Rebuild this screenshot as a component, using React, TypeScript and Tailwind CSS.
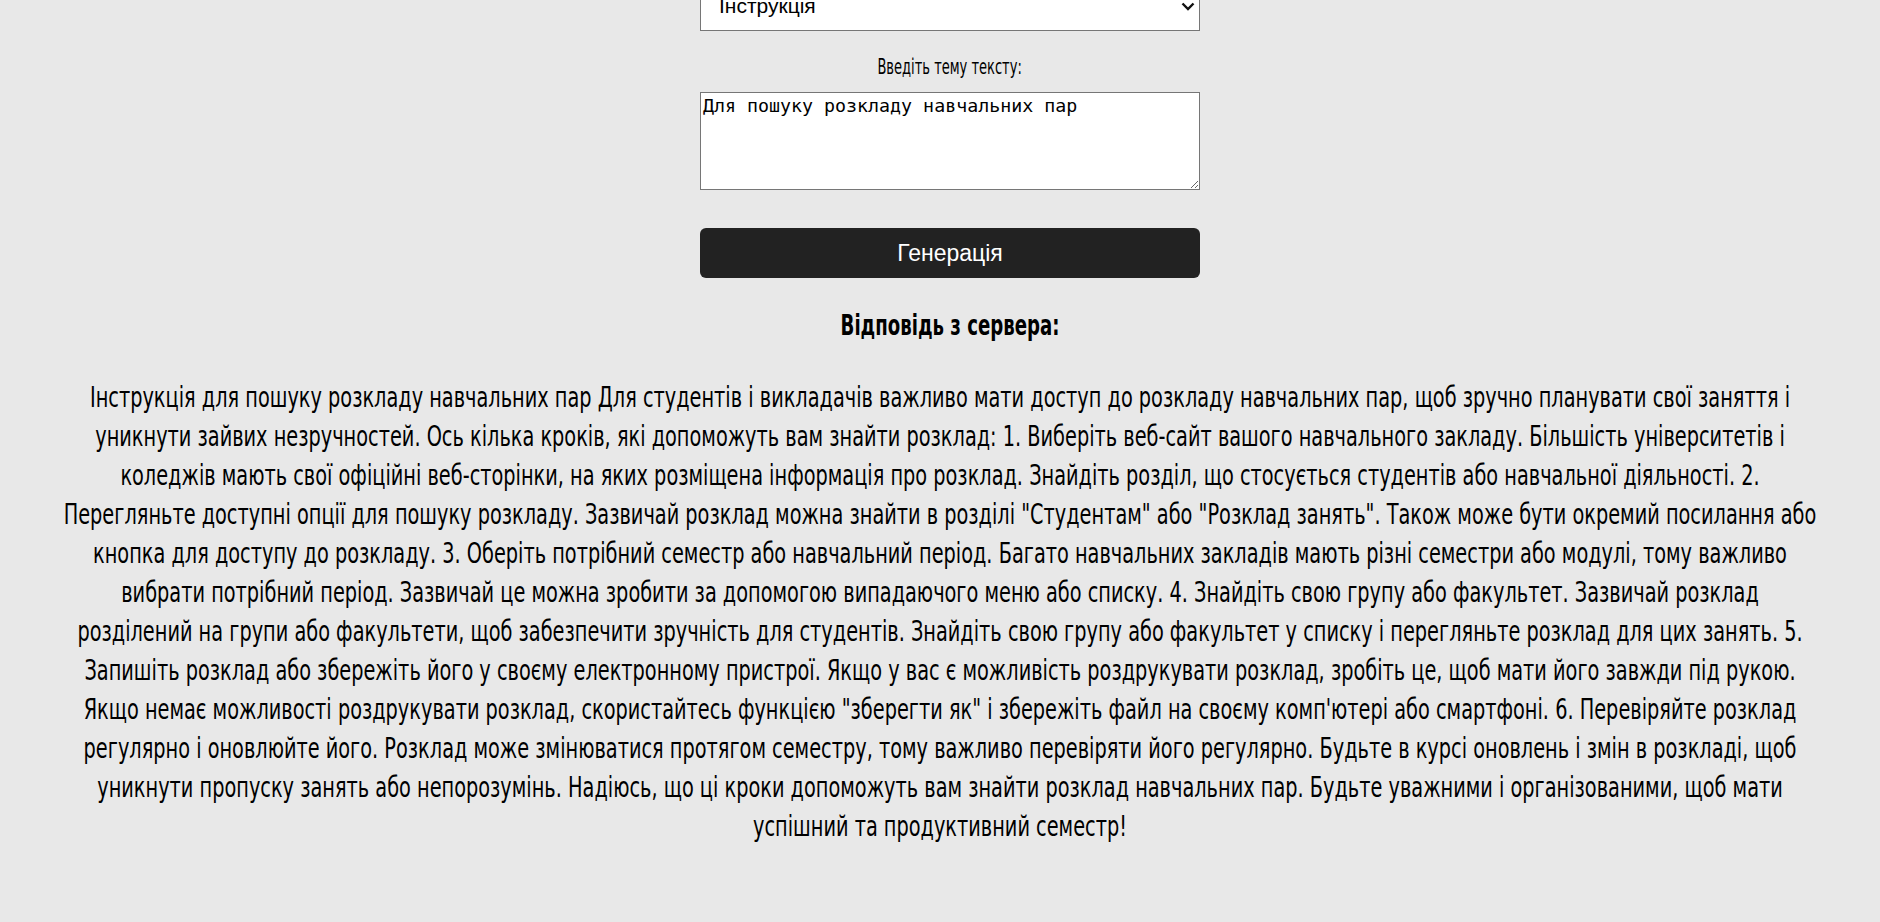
import { useState } from 'react';

const answerLines = [
  'Інструкція для пошуку розкладу навчальних пар Для студентів і викладачів важливо мати доступ до розкладу навчальних пар, щоб зручно планувати свої заняття і',
  'уникнути зайвих незручностей. Ось кілька кроків, які допоможуть вам знайти розклад: 1. Виберіть веб-сайт вашого навчального закладу. Більшість університетів і',
  'коледжів мають свої офіційні веб-сторінки, на яких розміщена інформація про розклад. Знайдіть розділ, що стосується студентів або навчальної діяльності. 2.',
  'Перегляньте доступні опції для пошуку розкладу. Зазвичай розклад можна знайти в розділі "Студентам" або "Розклад занять". Також може бути окремий посилання або',
  'кнопка для доступу до розкладу. 3. Оберіть потрібний семестр або навчальний період. Багато навчальних закладів мають різні семестри або модулі, тому важливо',
  'вибрати потрібний період. Зазвичай це можна зробити за допомогою випадаючого меню або списку. 4. Знайдіть свою групу або факультет. Зазвичай розклад',
  'розділений на групи або факультети, щоб забезпечити зручність для студентів. Знайдіть свою групу або факультет у списку і перегляньте розклад для цих занять. 5.',
  'Запишіть розклад або збережіть його у своєму електронному пристрої. Якщо у вас є можливість роздрукувати розклад, зробіть це, щоб мати його завжди під рукою.',
  'Якщо немає можливості роздрукувати розклад, скористайтесь функцією "зберегти як" і збережіть файл на своєму комп\'ютері або смартфоні. 6. Перевіряйте розклад',
  'регулярно і оновлюйте його. Розклад може змінюватися протягом семестру, тому важливо перевіряти його регулярно. Будьте в курсі оновлень і змін в розкладі, щоб',
  'уникнути пропуску занять або непорозумінь. Надіюсь, що ці кроки допоможуть вам знайти розклад навчальних пар. Будьте уважними і організованими, щоб мати',
  'успішний та продуктивний семестр!',
];

const App = () => {
  const [type, setType] = useState('Інструкція');
  const [topic, setTopic] = useState('Для пошуку розкладу навчальних пар');

  return (
    <div className="min-h-screen overflow-hidden bg-[#e8e8e8] text-black font-['DejaVu_Sans_Condensed',sans-serif]">
      <div className="flex flex-col items-center pl-5 -mt-[15px]">
        <div className="relative w-[500px]">
          <select
            value={type}
            onChange={(e) => setType(e.target.value)}
            className="w-full h-[46px] appearance-none bg-white border border-[#767676] pl-[18px] pb-[4px] text-[21px] font-['Liberation_Sans',Arial,sans-serif] outline-none"
          >
            <option>Інструкція</option>
            <option>Стаття</option>
            <option>Оповідання</option>
          </select>
          <svg
            className="absolute right-[5px] top-[17px] pointer-events-none"
            width="14"
            height="9"
            viewBox="0 0 14 9"
            fill="none"
          >
            <path d="M1.5 1.5l5.5 5.5 5.5-5.5" stroke="#111" strokeWidth="2.4" />
          </svg>
        </div>

        <label className="mt-[23px] text-[21px] leading-[26px] scale-x-[0.69]">Введіть тему тексту:</label>

        <textarea
          value={topic}
          onChange={(e) => setTopic(e.target.value)}
          className="mt-[12px] w-[500px] h-[98px] bg-white border border-[#767676] p-[2px] text-[18.3px] leading-[22px] font-['DejaVu_Sans_Mono',monospace] outline-none"
        />

        <button className="mt-[38px] w-[500px] h-[50px] rounded-md bg-[#222222] text-white text-[23px] font-['Liberation_Sans',Arial,sans-serif]">
          Генерація
        </button>

        <h2 className="mt-[31px] text-[28px] leading-[34px] font-bold scale-x-[0.72]">Відповідь з сервера:</h2>
      </div>

      <div className="mt-[35px] flex flex-col items-center text-[28px] leading-[39px] scale-x-[0.767]">
        {answerLines.map((line, idx) => (
          <p key={idx} className="whitespace-nowrap">
            {line}
          </p>
        ))}
      </div>
    </div>
  );
};

export default App;
